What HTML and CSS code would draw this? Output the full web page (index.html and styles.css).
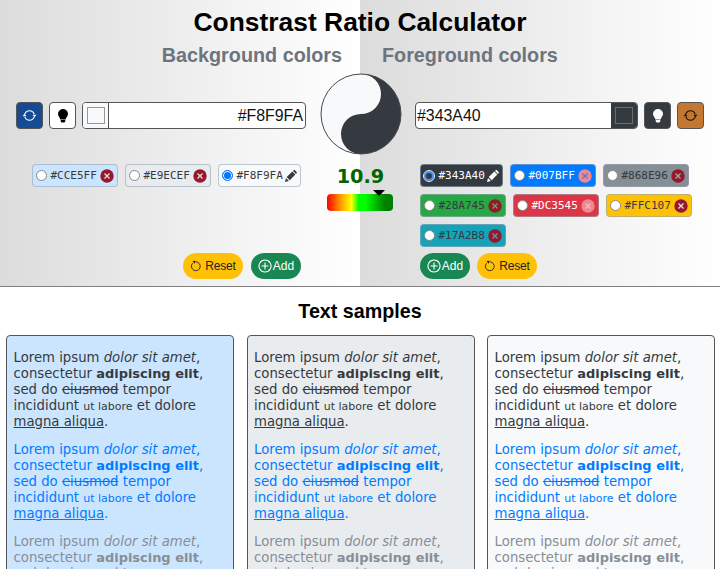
FILE: index.html
```html
<!DOCTYPE html>
<html lang="en">
<head>
<meta charset="utf-8">
<title>Constrast Ratio Calculator</title>
<link rel="stylesheet" href="styles.css">
</head>
<body>
<svg class="defs" aria-hidden="true">
  <symbol id="sync" viewBox="0 0 16 16"><path d="M3 6.500A5.300 5.300 0 0 1 13 6.500M13 9.500A5.300 5.300 0 0 1 3 9.500" fill="none" stroke="currentColor" stroke-width="1.200"/><path d="M11.200 7.200h4.200l-2.100 2.600zM.6 8.800h4.200L2.700 6.200z" fill="currentColor"/></symbol>
  <symbol id="bulb" viewBox="0 0 12 16"><path d="M6 1a5 5 0 0 0-5 5c0 2.400 2 3.200 2.400 5.400h5.200C9 9.200 11 8.400 11 6a5 5 0 0 0-5-5zM3.700 12h4.600v1.500l-1 1H4.700l-1-1z" fill="currentColor"/></symbol>
  <symbol id="remove" viewBox="0 0 14 14"><circle cx="7" cy="7" r="6.700" class="disc"/><path d="M4.500 4.500l5 5m0-5l-5 5" class="cross"/></symbol>
  <symbol id="pencil" viewBox="0 0 12 12"><path d="M0 12l1-4 2.900 2.900zM1.700 7.100L7.300 1.600l3 3-5.500 5.600zM8 .9l.7-.6c.4-.4.900-.4 1.300 0l1.600 1.600c.4.4.4.9 0 1.300L11 3.900z" fill="currentColor"/></symbol>
  <symbol id="reset" viewBox="0 0 12 12"><path d="M2.700 3.200A4.400 4.400 0 1 0 6 1.900" fill="none" stroke="currentColor" stroke-width=".9"/><path d="M2.500 1l3.200-.3-1 3z" fill="currentColor"/></symbol>
  <symbol id="plus" viewBox="0 0 14 14"><path d="M7 1a6 6 0 1 0 .01 0M7 3.600v6.800M3.600 7h6.800" fill="none" stroke="currentColor" stroke-width="1.100"/></symbol>
</svg>
<header class="calculator">
  <h1>Constrast Ratio Calculator</h1>
  <div class="subtitles"><h2>Background colors</h2><h2>Foreground colors</h2></div>
  <div class="panels">
    <section class="panel background">
      <div class="controls">
        <button class="square blue"><svg class="i-sync"><use href="#sync"/></svg></button>
        <button class="square white"><svg class="i-bulb"><use href="#bulb"/></svg></button>
        <div class="field"><span class="picker"><i></i></span><span class="value">#F8F9FA</span></div>
      </div>
      <div class="chips">
        <label class="chip c1"><i class="radio"></i>#CCE5FF<svg><use href="#remove"/></svg></label>
        <label class="chip c2"><i class="radio"></i>#E9ECEF<svg><use href="#remove"/></svg></label>
        <label class="chip c3"><i class="radio on"></i>#F8F9FA<svg class="i-pencil"><use href="#pencil"/></svg></label>
      </div>
      <div class="actions">
        <button class="pill reset"><svg><use href="#reset"/></svg>Reset</button>
        <button class="pill add"><svg><use href="#plus"/></svg>Add</button>
      </div>
    </section>
    <section class="result">
      <svg class="yinyang" viewBox="0 0 82 82"><circle cx="41" cy="41" r="40" fill="#f8f9fa"/><path d="M41 1a40 40 0 0 1 0 80a20 20 0 0 1 0-40a20 20 0 0 0 0-40" fill="#343a40"/><circle cx="41" cy="41" r="40" fill="none" stroke="#44484e"/></svg>
      <div class="ratio">10.9</div>
      <div class="meter"><span class="marker"></span></div>
    </section>
    <section class="panel foreground">
      <div class="controls">
        <div class="field"><span class="value">#343A40</span><span class="picker"><i></i></span></div>
        <button class="square dark"><svg class="i-bulb"><use href="#bulb"/></svg></button>
        <button class="square orange"><svg class="i-sync"><use href="#sync"/></svg></button>
      </div>
      <div class="chips">
        <label class="chip f1"><i class="radio on"></i>#343A40<svg class="i-pencil"><use href="#pencil"/></svg></label>
        <label class="chip f2"><i class="radio"></i>#007BFF<svg><use href="#remove"/></svg></label>
        <label class="chip f3"><i class="radio"></i>#868E96<svg><use href="#remove"/></svg></label>
        <label class="chip f4"><i class="radio"></i>#28A745<svg><use href="#remove"/></svg></label>
        <label class="chip f5"><i class="radio"></i>#DC3545<svg><use href="#remove"/></svg></label>
        <label class="chip f6"><i class="radio"></i>#FFC107<svg><use href="#remove"/></svg></label>
        <label class="chip f7"><i class="radio"></i>#17A2B8<svg><use href="#remove"/></svg></label>
      </div>
      <div class="actions">
        <button class="pill add"><svg><use href="#plus"/></svg>Add</button>
        <button class="pill reset"><svg><use href="#reset"/></svg>Reset</button>
      </div>
    </section>
  </div>
</header>
<main>
  <h3>Text samples</h3>
  <div class="samples">
    <article class="c1">
      <p class="t1">Lorem ipsum <em>dolor sit amet</em>,<br>consectetur <b>adipiscing elit</b>,<br>sed do <s>eiusmod</s> tempor<br>incididunt <small>ut labore</small> et dolore<br><u>magna aliqua</u>.</p>
      <p class="t2">Lorem ipsum <em>dolor sit amet</em>,<br>consectetur <b>adipiscing elit</b>,<br>sed do <s>eiusmod</s> tempor<br>incididunt <small>ut labore</small> et dolore<br><u>magna aliqua</u>.</p>
      <p class="t3">Lorem ipsum <em>dolor sit amet</em>,<br>consectetur <b>adipiscing elit</b>,<br>sed do <s>eiusmod</s> tempor</p>
    </article>
    <article class="c2">
      <p class="t1">Lorem ipsum <em>dolor sit amet</em>,<br>consectetur <b>adipiscing elit</b>,<br>sed do <s>eiusmod</s> tempor<br>incididunt <small>ut labore</small> et dolore<br><u>magna aliqua</u>.</p>
      <p class="t2">Lorem ipsum <em>dolor sit amet</em>,<br>consectetur <b>adipiscing elit</b>,<br>sed do <s>eiusmod</s> tempor<br>incididunt <small>ut labore</small> et dolore<br><u>magna aliqua</u>.</p>
      <p class="t3">Lorem ipsum <em>dolor sit amet</em>,<br>consectetur <b>adipiscing elit</b>,<br>sed do <s>eiusmod</s> tempor</p>
    </article>
    <article class="c3">
      <p class="t1">Lorem ipsum <em>dolor sit amet</em>,<br>consectetur <b>adipiscing elit</b>,<br>sed do <s>eiusmod</s> tempor<br>incididunt <small>ut labore</small> et dolore<br><u>magna aliqua</u>.</p>
      <p class="t2">Lorem ipsum <em>dolor sit amet</em>,<br>consectetur <b>adipiscing elit</b>,<br>sed do <s>eiusmod</s> tempor<br>incididunt <small>ut labore</small> et dolore<br><u>magna aliqua</u>.</p>
      <p class="t3">Lorem ipsum <em>dolor sit amet</em>,<br>consectetur <b>adipiscing elit</b>,<br>sed do <s>eiusmod</s> tempor</p>
    </article>
  </div>
</main>
</body>
</html>
```
FILE: styles.css
```css
* { box-sizing: border-box; }
html, body { height: 569px; overflow: hidden; }
body { margin: 0; background: #fff; font-family: "Liberation Sans", sans-serif; }
h1, h2, h3, p { margin: 0; }
i { display: block; }
.defs { position: absolute; width: 0; height: 0; }
.calculator {
  height: 287px;
  border-bottom: 1px solid #808080;
  background: linear-gradient(90deg, #dcdcdc, #fff) 0 0 / 360px 100% repeat-x;
}
h1 { height: 43px; padding-top: 6px; font-size: 26.4px; line-height: 32px; text-align: center; color: #000; }
.subtitles { display: grid; grid-template-columns: 342px 338px; column-gap: 40px; height: 30px; }
h2 { font-size: 19.8px; line-height: 24px; color: #6c757d; }
h2:first-child { text-align: right; }
.panels { display: grid; grid-template-columns: 306px 109px 305px; height: 213px; }
.panel { display: flex; flex-direction: column; }
.controls { display: flex; gap: 6px; height: 56px; padding-top: 29px; }
.background .controls { padding-left: 16px; }
.foreground .controls { padding-right: 16px; }
.square { display: flex; align-items: center; justify-content: center; width: 27px; height: 27px; padding: 0; border: 1px solid #555; border-radius: 4px; }
.blue { background: #164b94; color: #fff; }
.white { background: #fff; color: #000; }
.dark { background: #343a40; color: #fff; }
.orange { background: #c47730; color: #111; }
.i-sync { width: 15px; height: 15px; }
.i-bulb { width: 12px; height: 16px; }
.field { display: flex; flex: 1; height: 27px; border: 1px solid #555; border-radius: 4px; background: #fff; overflow: hidden; }
.picker { display: flex; align-items: center; justify-content: center; width: 26px; background: #f8f9fa; border-right: 1px solid #555; }
.picker i { width: 18px; height: 17px; border: 1px solid #999; }
.foreground .picker { background: #343a40; border: 0; }
.foreground .picker i { border-color: #686d72; }
.value { flex: 1; padding: 0 2px 0 1px; font-size: 15.9px; line-height: 26px; color: #111; }
.background .value { text-align: right; }
.chips { display: flex; flex-wrap: wrap; align-content: flex-start; gap: 7px; height: 124px; padding-top: 35px; }
.background .chips { padding-left: 32px; }
.foreground .chips { padding-left: 5px; }
.chip { --disc: #96182b; --cross: #e8dfe3; display: flex; align-items: center; width: 86px; height: 23px; padding-left: 3px; border: 1px solid rgba(150, 165, 180, .6); border-radius: 4px; font: 11px/20px "DejaVu Sans Mono", monospace; color: #343a40; }
.chip svg { width: 14px; height: 14px; margin-left: 3px; flex: none; }
.chip .i-pencil { width: 12px; height: 12px; margin-left: 2px; }
.c3.chip, .f1.chip { width: 83px; }
.radio { width: 11px; height: 11px; margin: 0 4px 0 -.5px; flex: none; border: 1px solid #888; border-radius: 50%; background: #fff; }
.radio.on { border-color: #0075ff; background: #0075ff; box-shadow: inset 0 0 0 1px #fff; }
.f1 .radio.on { width: 10px; height: 10px; margin: 0 4.5px 0 0; border: 2px solid #6db0ff; background: #1b62b5; box-shadow: none; }
.disc { fill: var(--disc); }
.cross { fill: none; stroke: var(--cross); stroke-width: 1.3; }
.c1 { background: #cce5ff; }
.c2 { background: #e9ecef; }
.c3 { background: #f8f9fa; }
.f1 { background: #343a40; color: #fff; }
.f1 .radio.on { border-color: #3d97ff; background: #343a40; outline: 1px solid #e4efff; }
.f2 { --disc: #ee8792; --cross: #5f75c8; background: #007bff; color: #fff; }
.f3 { --cross: #a2aab2; background: #868e96; }
.f4 { --cross: #66a367; background: #28a745; }
.f5 { --disc: #ee8792; --cross: #f6bcc2; background: #dc3545; color: #fff; }
.f6 { background: #ffc107; }
.f7 { --cross: #619bae; background: #17a2b8; }
.actions { display: flex; gap: 8px; }
.background .actions { justify-content: flex-end; padding-right: 5px; }
.foreground .actions { gap: 7px; padding-left: 5px; }
.pill { display: flex; align-items: center; justify-content: center; height: 26px; padding: 0; border: 0; border-radius: 13px; font: 12px "Liberation Sans", sans-serif; }
.pill.reset { width: 60px; background: #ffc107; color: #222; letter-spacing: -.2px; }
.pill.add { width: 50px; background: #198754; color: #fff; }
.reset svg { width: 12px; height: 12px; margin-right: 3px; }
.add svg { width: 14px; height: 14px; margin-right: 1px; }
.result { display: flex; flex-direction: column; align-items: center; }
.yinyang { width: 82px; height: 82px; flex: none; }
.ratio { height: 39px; padding-top: 10px; font: bold 19.3px/24px "DejaVu Sans", sans-serif; color: #006400; }
.meter { position: relative; width: 66px; height: 17px; margin-right: 1px; border-radius: 4px; background: linear-gradient(90deg, red, orange 22%, yellow 37%, lime 48%, lime 58%, green 88%); }
.marker { position: absolute; left: 46px; top: -4px; border: 6px solid transparent; border-top-color: #000; border-bottom: 0; }
h3 { height: 48px; padding-top: 12px; font-size: 19.7px; line-height: 24px; text-align: center; color: #000; }
.samples { display: grid; grid-template-columns: repeat(3, 228px); gap: 12.5px; padding-left: 6px; }
.samples article { height: 300px; padding: 14px 6.5px; border: 1px solid #555; border-radius: 4px; font: 13.25px/16px "DejaVu Sans", sans-serif; white-space: nowrap; }
.samples p { height: 80px; margin-bottom: 12px; }
.samples b { font-size: 12.95px; line-height: 1; }
.samples small { font-size: 11px; line-height: 1; }
.t1 { color: #343a40; }
.t2 { color: #007bff; }
.t3 { color: #868e96; }
```
